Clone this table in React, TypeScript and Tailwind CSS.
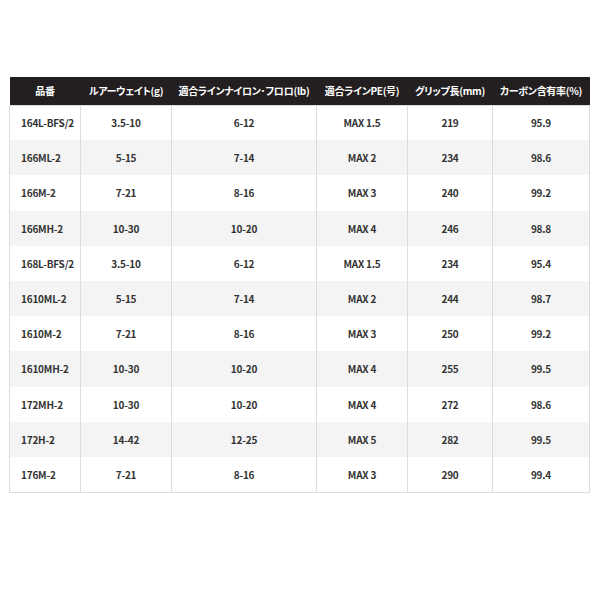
const headers = [
  "品番",
  "ルアーウェイト(g)",
  "適合ラインナイロン･フロロ(lb)",
  "適合ラインPE(号)",
  "グリップ長(mm)",
  "カーボン含有率(%)",
];

const widths = ["w-[71px]", "w-[91px]", "w-[145px]", "w-[91px]", "w-[85px]", "w-[97px]"];

const rows = [
  ["164L-BFS/2", "3.5-10", "6-12", "MAX 1.5", "219", "95.9"],
  ["166ML-2", "5-15", "7-14", "MAX 2", "234", "98.6"],
  ["166M-2", "7-21", "8-16", "MAX 3", "240", "99.2"],
  ["166MH-2", "10-30", "10-20", "MAX 4", "246", "98.8"],
  ["168L-BFS/2", "3.5-10", "6-12", "MAX 1.5", "234", "95.4"],
  ["1610ML-2", "5-15", "7-14", "MAX 2", "244", "98.7"],
  ["1610M-2", "7-21", "8-16", "MAX 3", "250", "99.2"],
  ["1610MH-2", "10-30", "10-20", "MAX 4", "255", "99.5"],
  ["172MH-2", "10-30", "10-20", "MAX 4", "272", "98.6"],
  ["172H-2", "14-42", "12-25", "MAX 5", "282", "99.5"],
  ["176M-2", "7-21", "8-16", "MAX 3", "290", "99.4"],
];

export default function App() {
  return (
    <div
      className="w-[600px] h-[600px] bg-white pt-[77px] pl-[9px] [font-feature-settings:'palt']"
      style={{ fontFamily: '"Noto Sans CJK JP", "Noto Sans", sans-serif' }}
    >
      <table className="w-[580px] border-collapse table-fixed text-[10px] font-bold">
        <thead>
          <tr className="bg-[#231f20] text-white h-[28px]">
            {headers.map((h, i) => (
              <th key={h} className={`${widths[i]} p-0 text-center font-bold whitespace-nowrap tracking-[-0.3px]`}>
                {h}
              </th>
            ))}
          </tr>
        </thead>
        <tbody className="border border-[#dcdcdc]">
          {rows.map((r, ri) => (
            <tr key={r[0]} className={`h-[35.2px] ${ri % 2 === 1 ? "bg-[#f4f4f4]" : "bg-white"} text-[#333]`}>
              {r.map((c, ci) => (
                <td
                  key={ci}
                  className={`p-0 border-r border-[#dcdcdc] whitespace-nowrap tracking-[-0.2px] ${ci === 0 ? "text-left pl-[11px]" : "text-center"}`}
                >
                  {c}
                </td>
              ))}
            </tr>
          ))}
        </tbody>
      </table>
    </div>
  );
}
